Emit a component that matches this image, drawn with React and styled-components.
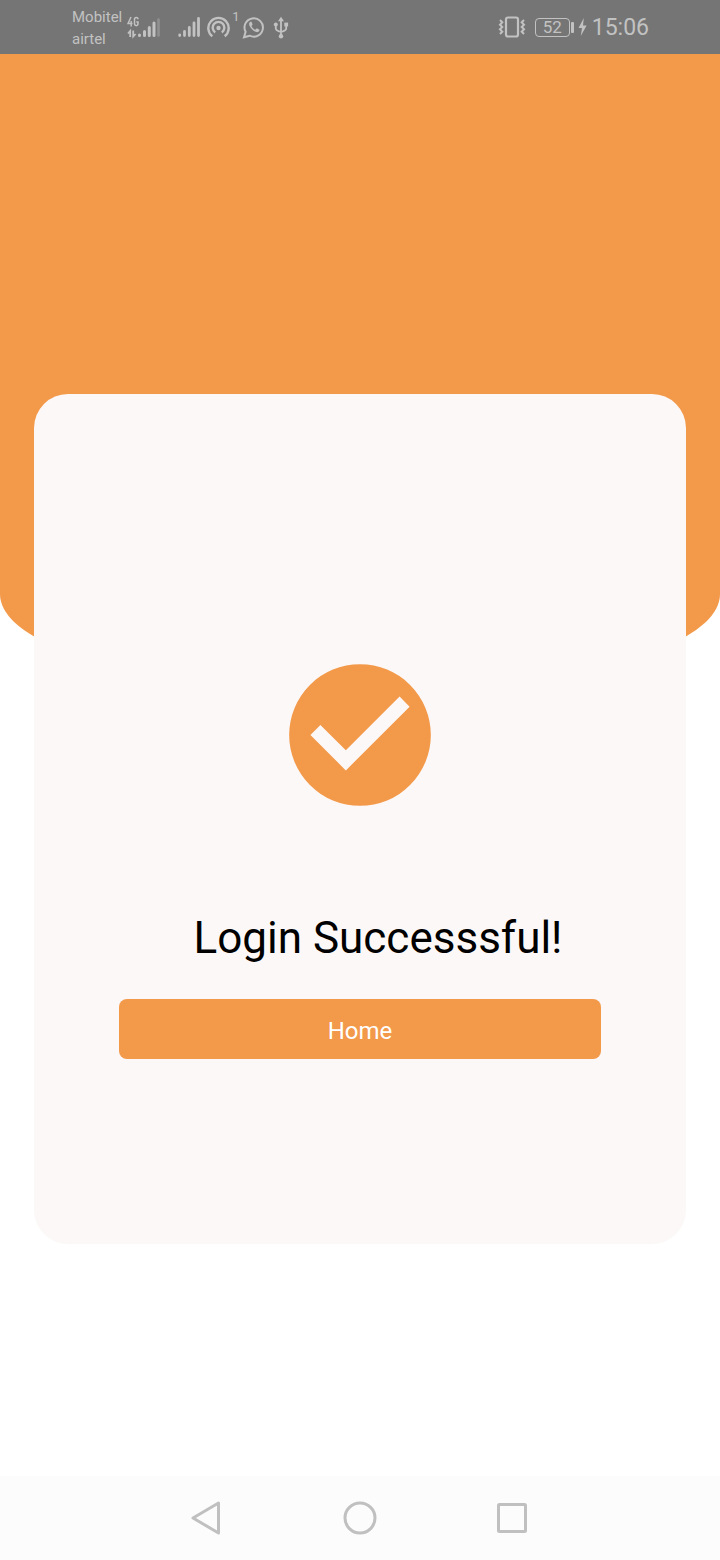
import React from "react";
import styled, { createGlobalStyle } from "styled-components";

const ORANGE = "#f3994a";
const ICON = "#c2c2c2";

const GlobalStyle = createGlobalStyle`
  * { box-sizing: border-box; }
  body {
    margin: 0;
    background: #ffffff;
    font-family: Roboto, "Liberation Sans", sans-serif;
  }
`;

const Screen = styled.div`
  min-height: 100vh;
  display: flex;
  flex-direction: column;
`;

const StatusBar = styled.header`
  height: 54px;
  padding: 0 71px 0 72px;
  display: flex;
  align-items: center;
  justify-content: space-between;
  background: #757575;
  color: ${ICON};
`;

const StatusGroup = styled.div`
  display: flex;
  align-items: center;
  gap: ${(p) => p.$gap};
`;

const Carriers = styled.div`
  padding-top: 2px;
  font-size: 15px;
  line-height: 22px;
`;

const Clock = styled.time`
  padding-top: 2px;
  font-size: 23px;
  line-height: 32px;
`;

const StatusIcon = styled.svg`
  display: block;
  flex: none;
  fill: none;
  stroke: ${ICON};
`;

const Hotspot = styled.div`
  width: 32px;
  display: flex;
  align-items: flex-start;
`;

const DeviceCount = styled.span`
  font-size: 13px;
  line-height: 12px;
`;

const Battery = styled.div`
  display: flex;
  align-items: center;
  gap: 1px;
`;

const BatteryLevel = styled.span`
  width: 35px;
  height: 19px;
  border: 1px solid ${ICON};
  border-radius: 4px;
  font-size: 17px;
  line-height: 17px;
  text-align: center;
`;

const BatteryTip = styled.span`
  width: 3px;
  height: 11px;
  border-radius: 1px;
  background: ${ICON};
`;

const Main = styled.main`
  flex: 1;
  display: flex;
  flex-direction: column;
`;

const Banner = styled.div`
  height: 616px;
  background: ${ORANGE};
  border-radius: 0 0 200px 200px / 0 0 76px 76px;
`;

const Card = styled.section`
  margin: -276px 34px 32px;
  min-height: 850px;
  padding: 70px 85px 0;
  display: flex;
  flex-direction: column;
  align-items: center;
  justify-content: center;
  background: #fcf8f7;
  border-radius: 34px;
`;

const CheckIcon = styled.svg`
  width: 170px;
  height: 170px;
  fill: ${ORANGE};
`;

const Title = styled.h1`
  margin: 92px 0 35px;
  padding-left: 36px;
  font-size: 44px;
  font-weight: 400;
  line-height: 52px;
  white-space: nowrap;
  color: #000000;
`;

const HomeButton = styled.button`
  width: 100%;
  height: 60px;
  padding: 4px 0 0;
  border: 0;
  border-radius: 8px;
  background: ${ORANGE};
  color: #ffffff;
  font: 400 24px/28px Roboto, "Liberation Sans", sans-serif;
`;

const NavBar = styled.nav`
  height: 84px;
  display: flex;
  align-items: center;
  justify-content: center;
  background: #fcfcfc;
`;

const NavButton = styled.button`
  width: 152px;
  height: 84px;
  padding: 0;
  border: 0;
  display: flex;
  align-items: center;
  justify-content: center;
  background: transparent;
`;

const NavIcon = styled.svg`
  width: 40px;
  height: 40px;
  fill: none;
  stroke: #c0c0c0;
  stroke-width: 3;
  stroke-linejoin: round;
`;

function NetworkIcon() {
  return (
    <StatusIcon width="33" height="28" viewBox="0 0 33 28" aria-label="4G signal">
      <path d="M4 4 1 10.5H5.5M4.2 8V13.5M11 6.2C11 3.8 7.5 3.8 7.5 6.2V10.6C7.5 13.3 11 13.3 11 10.6V9H9.3" strokeWidth="1.5" />
      <path d="M3.2 24V18L1 20.5M6.2 17.5V23.5L8.6 21" strokeWidth="1.8" />
      <path d="M12.5 22V22.5M17.5 18.5V22.5M22.3 14.5V22.5M27 10V22.5" strokeWidth="3" strokeLinecap="round" />
      <path d="M31.5 6.5V22.5" strokeWidth="2.6" opacity=".35" strokeLinecap="round" />
    </StatusIcon>
  );
}

function SignalIcon() {
  return (
    <StatusIcon width="23" height="28" viewBox="0 0 23 28" aria-label="Signal">
      <path d="M1.7 22V22.5M6.5 18.5V22.5M11.3 14.5V22.5M16 10V22.5M20.5 5.5V22.5" strokeWidth="2.8" strokeLinecap="round" />
    </StatusIcon>
  );
}

function HotspotIcon() {
  return (
    <Hotspot>
      <StatusIcon width="25" height="32" viewBox="0 0 25 32" aria-label="Hotspot">
        <path d="M5.3 25.2A10.2 10.2 0 1 1 17.7 25.2M8.2 21.4A5.8 5.8 0 1 1 14.8 21.4" strokeWidth="2.4" />
        <circle cx="11.5" cy="17" r="2.2" fill={ICON} stroke="none" />
      </StatusIcon>
      <DeviceCount>1</DeviceCount>
    </Hotspot>
  );
}

function WhatsAppIcon() {
  return (
    <StatusIcon width="24" height="26" viewBox="0 0 24 26" aria-label="WhatsApp">
      <path d="M3.6 17.8A9.2 9.2 0 1 1 7.6 21.7L2 23.2Z" strokeWidth="2" />
      <path d="M8.3 7.8C7 8.5 6.8 10.2 7.5 11.8 9 15 11.4 17.2 14.4 18.1 16 18.5 17.5 17.2 17.5 15.7L14.8 14.3 13.3 15.8C11.6 15.1 10.2 13.7 9.5 12L10.6 10.5 9.5 7.8Z" fill={ICON} stroke="none" />
    </StatusIcon>
  );
}

function UsbIcon() {
  return (
    <StatusIcon width="16" height="26" viewBox="0 -2 16 26" aria-label="USB">
      <path d="M8 4V20M2.8 9V12.5Q2.8 14.5 8 16Q13.2 14.5 13.2 12.5V9" strokeWidth="1.8" />
      <path d="M8 .8 11 5.2H5Z" fill={ICON} stroke="none" />
      <circle cx="8" cy="20.3" r="2.2" fill={ICON} stroke="none" />
      <circle cx="2.8" cy="8.5" r="2" fill={ICON} stroke="none" />
      <path d="M11.3 6.6H15.1V10.4H11.3Z" fill={ICON} stroke="none" />
    </StatusIcon>
  );
}

function VibrateIcon() {
  return (
    <StatusIcon width="28" height="22" viewBox="0 0 28 22" aria-label="Vibrate">
      <rect x="8" y="1.5" width="12" height="19" rx="2" strokeWidth="2.2" />
      <path d="M2 4 4.3 6.3 2 8.7 4.3 11 2 13.3 4.3 15.7 2 18M26 4 23.7 6.3 26 8.7 23.7 11 26 13.3 23.7 15.7 26 18" strokeWidth="2" />
    </StatusIcon>
  );
}

function BoltIcon() {
  return (
    <StatusIcon width="9" height="18" viewBox="0 0 9 18" aria-label="Charging">
      <path d="M5.8 0 .5 10H4L2.8 18 8.6 7.5H5Z" fill={ICON} stroke="none" />
    </StatusIcon>
  );
}

export default function App() {
  return (
    <Screen>
      <GlobalStyle />
      <StatusBar>
        <StatusGroup $gap="5px">
          <Carriers>
            <div>Mobitel</div>
            <div>airtel</div>
          </Carriers>
          <StatusGroup $gap="18px">
            <NetworkIcon />
            <StatusGroup $gap="6px">
              <SignalIcon />
              <StatusGroup $gap="3px">
                <HotspotIcon />
                <StatusGroup $gap="7px">
                  <WhatsAppIcon />
                  <UsbIcon />
                </StatusGroup>
              </StatusGroup>
            </StatusGroup>
          </StatusGroup>
        </StatusGroup>
        <StatusGroup $gap="9px">
          <VibrateIcon />
          <StatusGroup $gap="4px">
            <Battery>
              <BatteryLevel>52</BatteryLevel>
              <BatteryTip />
            </Battery>
            <StatusGroup $gap="5px">
              <BoltIcon />
              <Clock>15:06</Clock>
            </StatusGroup>
          </StatusGroup>
        </StatusGroup>
      </StatusBar>
      <Main>
        <Banner />
        <Card>
          <CheckIcon viewBox="0 0 24 24" aria-hidden="true">
            <path fillRule="evenodd" d="M12 2a10 10 0 1 0 0 20 10 10 0 0 0 0-20zm-2 15-5-5 1.41-1.41L10 14.17l7.59-7.59L19 8z" />
          </CheckIcon>
          <Title>Login Successsful!</Title>
          <HomeButton type="button">Home</HomeButton>
        </Card>
      </Main>
      <NavBar>
        <NavButton type="button" aria-label="Back">
          <NavIcon viewBox="0 0 40 40">
            <path d="M30.5 5V35L5 20Z" />
          </NavIcon>
        </NavButton>
        <NavButton type="button" aria-label="Home screen">
          <NavIcon viewBox="0 0 40 40">
            <circle cx="20" cy="20" r="15" />
          </NavIcon>
        </NavButton>
        <NavButton type="button" aria-label="Recent apps">
          <NavIcon viewBox="0 0 40 40">
            <rect x="6.5" y="6.5" width="27" height="27" rx="1" />
          </NavIcon>
        </NavButton>
      </NavBar>
    </Screen>
  );
}
